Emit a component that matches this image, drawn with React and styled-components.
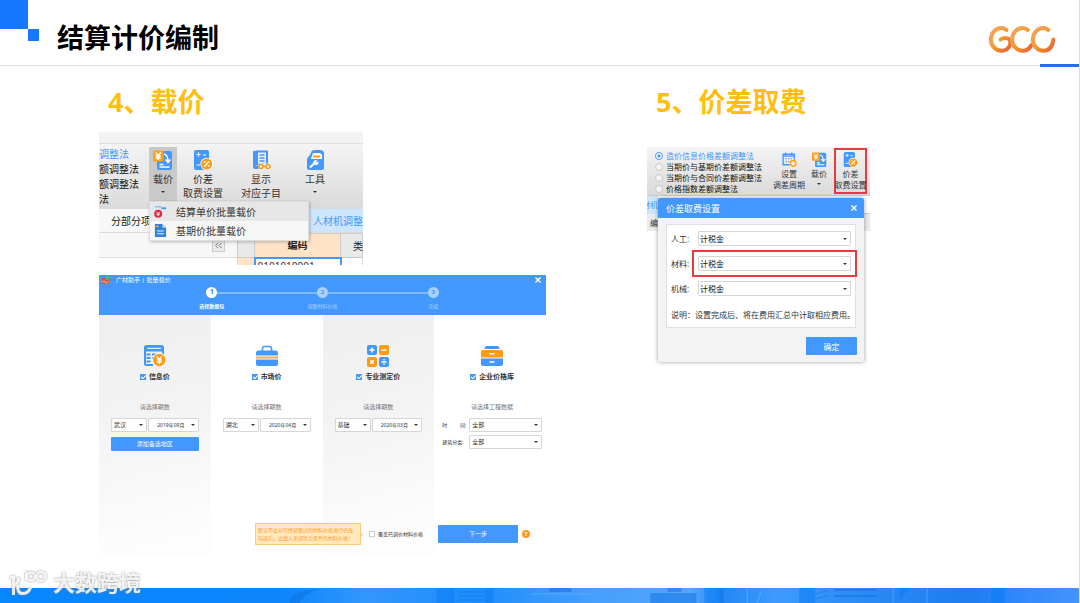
import React from 'react';
import styled, { createGlobalStyle, css } from 'styled-components';

const COLORS = {
	primary: '#4398fd',
	brand: '#1677ff',
	orange: '#ff9a14',
	heading: '#ffbf0f',
	red: '#e93a3d',
	text: '#333',
	muted: '#777',
	border: '#d6d6d6',
};

const App = () => (
	<Page>
		<GlobalStyle />
		<Header>
			<Squares><i /><i /></Squares>
			<Title>结算计价编制</Title>
			<LogoBox><GccLogo /></LogoBox>
		</Header>
		<Main>
			<Column>
				<Heading>4、载价</Heading>
				<RibbonCapture />
				<PriceCapture />
			</Column>
			<Column>
				<Heading>5、价差取费</Heading>
				<FeeCapture />
			</Column>
		</Main>
		<Footer>
			<Skyline />
			<Watermark>
				<WatermarkIcon />
				<span>大数跨境</span>
			</Watermark>
		</Footer>
	</Page>
);

export default App;

/* ---------- ribbon with the drop-down menu ---------- */

const RibbonCapture = () => (
	<RibbonFrame>
		<Strip />
		<Ribbon>
			<Methods>
				<li>调整法</li>
				<li>额调整法</li>
				<li>额调整法</li>
				<li>法</li>
			</Methods>
			<ToolSlot>
				<Tool $active>
					<LoadIcon />
					<span>载价</span>
					<Caret />
				</Tool>
				<Menu>
					<MenuItem $active><UnitIcon />结算单价批量载价</MenuItem>
					<MenuItem><BaseIcon />基期价批量载价</MenuItem>
				</Menu>
			</ToolSlot>
			<Tool $width={52}><DiffIcon /><span>价差</span><span>取费设置</span></Tool>
			<Tool $width={64}><ShowIcon /><span>显示</span><span>对应子目</span></Tool>
			<Tool $width={44}><ToolIcon /><span>工具</span><Caret /></Tool>
		</Ribbon>
		<TabRow>
			<Tab>分部分项</Tab>
			<Tab $active>人材机调整</Tab>
		</TabRow>
		<SheetRow>
			<SheetSide><Collapse aria-label="收起"><CollapseIcon /></Collapse></SheetSide>
			<Sheet>
				<thead>
					<tr><th /><th>编码</th><th>类</th></tr>
				</thead>
				<tbody>
					<tr><td /><td>0101010001</td><td /></tr>
				</tbody>
			</Sheet>
		</SheetRow>
	</RibbonFrame>
);

/* ---------- batch price window ---------- */

const STEPS = ['选择数据包', '调整材料价格', '完成'];

const SOURCES = [
	{ name: '信息价', icon: () => <InfoIcon />, hint: '请选择期数', area: '武汉', month: '2019年09月', extra: true },
	{ name: '市场价', icon: () => <MarketIcon />, hint: '请选择期数', area: '湖北', month: '2020年04月' },
	{ name: '专业测定价', icon: () => <CalcIcon />, hint: '请选择期数', area: '基础', month: '2020年03月' },
	{ name: '企业价格库', icon: () => <DrawerIcon />, hint: '请选择工程数据' },
];

const Picker = ({ value, label, ...rest }) => (
	<SelectBox {...rest}>
		<select aria-label={label} defaultValue={value}>
			<option>{value}</option>
		</select>
		<Caret />
	</SelectBox>
);

const PriceCapture = () => (
	<PriceFrame>
		<PriceHead>
			<PriceTitle>
				<AppMark />
				<span>广材助手 | 批量载价</span>
				<CloseButton aria-label="关闭"><CloseIcon /></CloseButton>
			</PriceTitle>
			<Steps>
				{STEPS.map((step, index) => (
					<Step key={step} $active={index === 0}>
						<b>{index + 1}</b>
						<span>{step}</span>
					</Step>
				))}
			</Steps>
		</PriceHead>
		<PriceBody>
			<Cards>
				{SOURCES.map((source) => (
					<Card key={source.name}>
						{source.icon()}
						<Check $bold>
							<input type="checkbox" defaultChecked />
							{source.name}
						</Check>
						<Hint>{source.hint}</Hint>
						{source.area ? (
							<PickerRow>
								<Picker label="地区" value={source.area} $grow={36} />
								<Picker label="期数" value={source.month} $grow={51} $date />
							</PickerRow>
						) : (
							<Fields>
								<label><span>时<i />间:</span><Picker label="时间" value="全部" /></label>
								<label><span>建筑分类:</span><Picker label="建筑分类" value="全部" /></label>
							</Fields>
						)}
						{source.extra && <AddButton>添加备选地区</AddButton>}
					</Card>
				))}
			</Cards>
			<Actions>
				<Tip>
					默认不会对已经调整过的材料价格进行修改,<br />
					勾选后，会载入全部符合条件的材料价格！
				</Tip>
				<Check $small>
					<input type="checkbox" />
					覆盖已调价材料价格
				</Check>
				<NextButton>下一步</NextButton>
				<Help aria-label="帮助">?</Help>
			</Actions>
		</PriceBody>
	</PriceFrame>
);

/* ---------- fee dialog ---------- */

const METHODS = [
	'造价信息价格差额调整法',
	'当期价与基期价差额调整法',
	'当期价与合同价差额调整法',
	'价格指数差额调整法',
];

const FEES = [
	{ label: '人工:' },
	{ label: '材料:', marked: true },
	{ label: '机械:' },
];

const FeeCapture = () => (
	<FeeFrame>
		<FeeRibbon>
			<Radios>
				{METHODS.map((method, index) => (
					<label key={method}>
						<input type="radio" name="method" defaultChecked={index === 0} />
						{method}
					</label>
				))}
			</Radios>
			<SmallTool><CalendarIcon /><span>设置</span><span>调差周期</span></SmallTool>
			<SmallTool><LoadIcon /><span>载价</span><Caret /></SmallTool>
			<SmallTool $marked><DiffIcon /><span>价差</span><span>取费设置</span></SmallTool>
		</FeeRibbon>
		<FeeTabs><span>材机</span></FeeTabs>
		<FeeSheet>编</FeeSheet>
		<Dialog role="dialog" aria-label="价差取费设置">
			<DialogHead>
				<span>价差取费设置</span>
				<CloseButton aria-label="关闭"><CloseIcon /></CloseButton>
			</DialogHead>
			<Panel>
				{FEES.map(({ label, marked }) => (
					<FeeRow key={label}>
						<span>{label}</span>
						<Mark $on={marked}>
							<Picker label={label} value="计税金" $large />
						</Mark>
					</FeeRow>
				))}
				<Note>说明：设置完成后、将在费用汇总中计取相应费用。</Note>
			</Panel>
			<OkButton>确定</OkButton>
		</Dialog>
	</FeeFrame>
);

/* ---------- drawings ---------- */

const GccLogo = () => (
	<svg width="68" height="29" viewBox="0 0 68 29" fill="none" strokeWidth="4" strokeLinecap="round">
		<defs>
			<linearGradient id="gcc" x1="0" y1="0" x2="1" y2="1">
				<stop offset="0" stopColor="#f2a568" />
				<stop offset=".5" stopColor="#f39a2c" />
				<stop offset="1" stopColor="#ea5c35" />
			</linearGradient>
		</defs>
		<path stroke="url(#gcc)" d="M18.500 5Q16 3 13.300 3A10.400 11.400 0 0 0 13.300 25.800Q19.500 25.800 22 20C23.500 15.500 21 13 17.500 13Q14.500 13 12.500 14.500" />
		<path stroke="url(#gcc)" d="M39.700 5Q37.500 3 34.500 3A10.400 11.400 0 0 0 34.500 25.800Q40.500 25.800 43.500 20" />
		<path stroke="url(#gcc)" d="M60.300 5Q58 3 55.300 3A10.400 11.400 0 0 0 55.300 25.800Q64 25.800 65.400 14.500" />
	</svg>
);

const LoadIcon = () => (
	<svg viewBox="0 0 20 20">
		<path fill="#4398fd" d="M9 1h8a2 2 0 0 1 2 2v15a2 2 0 0 1-2 2H6a2 2 0 0 1-2-2V11h6z" />
		<path fill="none" stroke="#fff" strokeWidth="1.500" d="M11 4q4 1 4 8M12.500 9.500l2.500 3 2.500-3M6.500 14.500h4M6.500 17h10" />
		<rect width="10.500" height="11" y=".5" rx="1" fill="#ffa11c" />
		<path stroke="#fff" strokeWidth="1.300" d="M2.500 2.500l2.700 3 2.700-3M5.200 5.500v4.500M2.700 6h5M2.700 8h5" fill="none" />
	</svg>
);

const DiffIcon = () => (
	<svg viewBox="0 0 20 20">
		<rect x="1" width="15" height="20" rx="2" fill="#4398fd" />
		<path stroke="#fff" strokeWidth="1.200" d="M3.500 4.500h4M5.500 2.500v4M3.500 15h3.500M10 5h3" />
		<circle cx="13.700" cy="14" r="6.300" fill="#fff" />
		<circle cx="13.700" cy="14" r="5.500" fill="#ff9a14" />
		<path stroke="#fff" strokeWidth="1.400" d="M11.200 16.700l5-5.400M10.800 12h1.800M14.800 16h1.800" />
	</svg>
);

const ShowIcon = () => (
	<svg viewBox="0 0 20 20">
		<path fill="#4398fd" d="M2 1h3v15h4v3H4a2 2 0 0 1-2-2z" />
		<path fill="none" stroke="#4398fd" strokeWidth="2" d="M6 1.500h10v13H6z" />
		<path stroke="#4398fd" strokeWidth="1.500" d="M8.500 5h5M8.500 8h5M8.500 11h5" />
		<path fill="#eee" d="M7.500 13.500h12V20h-12z" />
		<g fill="none" stroke="#ff9a14" strokeWidth="1.500">
			<circle cx="10" cy="16.500" r="2" /><circle cx="17" cy="16.500" r="2" /><path d="M12 16.500h3" />
		</g>
	</svg>
);

const ToolIcon = () => (
	<svg viewBox="0 0 20 20">
		<path fill="#4398fd" d="M6 3q0-3 4-3h5q4 0 4 4v14q0 2-2 2H4q-2 0-2-2V9z" />
		<path fill="#fff" d="M8 3h7l2 2v4H6z" />
		<path fill="#ff9a14" d="M8 5.500h7.500v2H8z" />
		<path stroke="#fff" strokeWidth="2" d="M5 17.500l5-5" />
		<circle cx="11" cy="12.500" r="2.500" fill="#fff" />
		<path stroke="#4398fd" strokeWidth="1.500" d="M11.500 12l3-3" />
	</svg>
);

const CalendarIcon = () => (
	<svg viewBox="0 0 20 20">
		<path fill="none" stroke="#4398fd" strokeWidth="1.800" d="M1.500 3h15v14h-15zM1.500 5.500h15M5 .5v4M13 .5v4" />
		<path stroke="#4398fd" strokeWidth="1.500" strokeDasharray="2 1.500" d="M4.500 9h10M4.500 13h6" />
		<circle cx="15" cy="15" r="5" fill="#fff" />
		<circle cx="15" cy="15" r="3.700" fill="none" stroke="#ff9a14" strokeWidth="1.800" />
		<path fill="none" stroke="#ff9a14" d="M15 13v2h2" />
	</svg>
);

const UnitIcon = () => (
	<svg viewBox="0 0 14 14">
		<path fill="#e4e9ef" d="M2 0h10v10H2z" />
		<path stroke="#4398fd" strokeWidth="2" d="M8 3.500h5" />
		<path stroke="#6f9fce" d="M1 2h7" />
		<circle cx="4.500" cy="9.500" r="4.300" fill="#de2945" />
		<path fill="none" stroke="#fff" d="M2.700 7.500l1.800 2 1.800-2M4.500 9.500v2.500M2.700 10h3.600" />
	</svg>
);

const BaseIcon = () => (
	<svg viewBox="0 0 14 14">
		<path fill="#2f82e0" d="M1 0h8l4 4v10H1z" />
		<path fill="#b9d8fb" d="M9 0l4 4H9z" />
		<path stroke="#fff" d="M3.500 7.500h7M3.500 10.500h7" />
		<path stroke="#ffb03a" strokeWidth="1.500" d="M2 2.500h3" />
	</svg>
);

const CollapseIcon = () => (
	<svg width="11" height="11" viewBox="0 0 11 11" fill="none" stroke="#777">
		<path d="M5 3L2.500 5.500 5 8M8.500 3L6 5.500 8.500 8" />
	</svg>
);

const CloseIcon = () => (
	<svg width="6" height="6" viewBox="0 0 6 6">
		<path stroke="#fff" strokeWidth="1.400" d="M.5.5l5 5M5.500.5l-5 5" />
	</svg>
);

const AppMark = () => (
	<svg width="9" height="9" viewBox="0 0 9 9">
		<path fill="#c8553d" d="M1 2h3v2h4v4H0V5h1z" />
		<path stroke="#f4c7a0" strokeWidth=".7" d="M0 6h8M3 4v2M5 6v2" />
		<path fill="#6fbf4b" d="M5 2q1-2 4-2-1 3-4 3z" />
	</svg>
);

const InfoIcon = () => (
	<svg viewBox="0 0 22 22">
		<path fill="#4398fd" d="M2.500 0h15A2.500 2.500 0 0 1 20 2.500V12h-2V6.500H2V19h7v2H2.500A2.500 2.500 0 0 1 0 18.500v-16A2.500 2.500 0 0 1 2.500 0z" />
		<path stroke="#fff" d="M3 3.300h14" />
		<path stroke="#4398fd" strokeWidth="1.800" d="M2.500 9.500h4M8 9.500h6M2.500 13h4M2.500 16.500h4M8 13h2" />
		<circle cx="15.300" cy="15" r="7.200" fill="#fff" />
		<circle cx="15.300" cy="15" r="6.200" fill="#ff9a14" />
		<path fill="none" stroke="#fff" strokeWidth="1.300" d="M12.800 11.500l2.500 3 2.500-3M15.300 14.500V19M12.800 15h5M12.800 17h5" />
	</svg>
);

const MarketIcon = () => (
	<svg viewBox="0 0 22 22">
		<path fill="none" stroke="#4398fd" strokeWidth="1.600" d="M6.500 6V3.500a2 2 0 0 1 2-2h5a2 2 0 0 1 2 2V6" />
		<path fill="#4398fd" d="M2.500 5.500h17A2.500 2.500 0 0 1 22 8v2.500H0V8a2.500 2.500 0 0 1 2.500-2.500zM0 14.500h22V19a2 2 0 0 1-2 2H2a2 2 0 0 1-2-2z" />
		<path fill="#f5a94a" d="M0 11.500h22v2H0z" />
	</svg>
);

const CalcIcon = () => (
	<svg viewBox="0 0 22 22">
		<rect width="10" height="10" rx="2" fill="#4398fd" />
		<rect x="12" width="10" height="10" rx="2" fill="#ff9a14" />
		<rect y="12" width="10" height="10" rx="2" fill="#ff9a14" />
		<rect x="12" y="12" width="10" height="10" rx="2" fill="#4398fd" />
		<path stroke="#fff" strokeWidth="1.500" d="M2.500 5h5M5 2.500v5M14.500 5h5M3.300 15.300l3.400 3.400M6.700 15.300l-3.400 3.400M14.500 17h5M17 14v1.500M17 18.500V20" />
	</svg>
);

const DrawerIcon = () => (
	<svg viewBox="0 0 22 22">
		<path fill="#4398fd" d="M5 1h12l2 3H3z" />
		<rect y="5" width="22" height="7.500" rx="1.500" fill="#ff9a14" />
		<path fill="#4398fd" d="M0 13.500h22V19a2 2 0 0 1-2 2H2a2 2 0 0 1-2-2z" />
		<path stroke="#fff" strokeWidth="1.500" d="M8.500 8.700h5M8.500 17h5" />
	</svg>
);

const WatermarkIcon = () => (
	<svg width="40" height="28" viewBox="0 0 40 28" fill="none" stroke="currentColor" strokeWidth="3">
		<path d="M1 9.500h3.500V27M5 17q4-1 5-7.500M9 17q-1.500 8.500 5 8.500 5.500 0 7.500-6" />
		<path strokeWidth="2" d="M17 3v9" />
		<circle cx="22" cy="8.500" r="4" strokeWidth="2.500" />
		<circle cx="32" cy="8.500" r="4.500" strokeWidth="2.500" />
	</svg>
);

const Skyline = () => (
	<SkylineArt viewBox="0 0 1080 15" preserveAspectRatio="none">
		<defs>
			<linearGradient id="sky">
				<stop offset="0" stopColor="#0787ff" />
				<stop offset=".26" stopColor="#0d85fb" />
				<stop offset=".34" stopColor="#3296fd" />
				<stop offset=".44" stopColor="#1e8dfb" />
				<stop offset=".55" stopColor="#469ffc" />
				<stop offset=".64" stopColor="#54a6fc" />
				<stop offset=".67" stopColor="#2388f4" />
				<stop offset=".72" stopColor="#3d9bfd" />
				<stop offset=".8" stopColor="#2a8bf6" />
				<stop offset=".9" stopColor="#1d7df0" />
				<stop offset=".94" stopColor="#2e88fc" />
				<stop offset="1" stopColor="#4594fd" />
			</linearGradient>
		</defs>
		<path fill="url(#sky)" d="M0 0h1080v15H0z" />
		<path fill="#0b6fe0" opacity=".5" d="M290 10q10-9 30-9-14 3-20 14h-10zM550 0h22v4h-22zM651 5h46v10h-46zM668 0h14v4h-14zM720 0h4v15h-4zM835 1h42v2h-42zM835 7h42v2h-42z" />
		<path fill="#087bf3" opacity=".5" d="M437 0h18v15h-18zM486 0h8v15h-8zM705 0h15v15h-15zM800 0h16v15h-16zM900 0l10 0-9 12zM992 0h14v15h-14z" />
		<path stroke="#0870e4" opacity=".5" d="M459 4h28M459 8h26M459 12h30M816 6l14-4M816 11l14-4" />
		<path stroke="#8cc5ff" opacity=".4" d="M532 6h60M748 1v14M758 15l4-12M894 0v15M928 0v15" />
	</SkylineArt>
);

/* ---------- styles ---------- */

const GlobalStyle = createGlobalStyle`
	* {
		box-sizing: border-box;
	}
	body {
		margin: 0;
		background: #fff;
		color: ${COLORS.text};
		font-family: "Noto Sans", "Noto Sans CJK SC", sans-serif;
	}
	button, select, input {
		font: inherit;
		color: inherit;
		margin: 0;
		padding: 0;
		border: 0;
		background: none;
	}
	svg {
		display: block;
		flex: none;
	}
`;

const Page = styled.div`
	display: flex;
	flex-direction: column;
	min-height: 100vh;
	border-right: 1px solid #ddd;
`;
const Header = styled.header`
	display: flex;
	height: 66px;
	border-bottom: 1px solid #dedede;
`;
const Squares = styled.div`
	width: 57px;
	i {
		display: block;
		width: 28px;
		height: 29px;
		background: ${COLORS.brand};
	}
	i + i {
		width: 11px;
		height: 12px;
		margin-left: 28px;
	}
`;
const Title = styled.h1`
	flex: 1;
	margin: 0;
	padding-top: 18px;
	font-size: 27px;
	line-height: 40px;
	color: #000;
`;
const LogoBox = styled.div`
	display: flex;
	justify-content: flex-end;
	padding: 25px 23px 0 0;
	margin-bottom: -2px;
	background: linear-gradient(#2271e8, #2271e8) right bottom / 39px 3px no-repeat;
`;
const Main = styled.main`
	display: grid;
	grid-template-columns: 548fr 432fr;
	padding-left: 99px;
`;
const Column = styled.section`
	min-width: 0;
`;
const Heading = styled.h2`
	margin: 0;
	padding: 19px 0 13px 9px;
	font-size: 27px;
	line-height: 34px;
	color: ${COLORS.heading};
`;
const Footer = styled.footer`
	position: relative;
	margin-top: auto;
`;
const SkylineArt = styled.svg`
	width: 100%;
	height: 15px;
`;
const Watermark = styled.div`
	position: absolute;
	left: 9px;
	bottom: 7px;
	display: flex;
	align-items: center;
	gap: 4px;
	color: rgba(255, 255, 255, .85);
	font-size: 22px;
	font-weight: bold;
	line-height: 28px;
	filter: drop-shadow(0 0 1px #888);
`;

const Caret = styled.i`
	display: block;
	margin: auto;
	border: 2px solid transparent;
	border-top-color: #333;
	border-bottom: 0;
`;

const RibbonFrame = styled.div`
	max-width: 264px;
	overflow: hidden;
	margin-bottom: 10px;
	font-size: 10px;
	line-height: 14px;
`;
const Strip = styled.div`
	height: 12px;
	background: #f3f3f3;
	border-bottom: 1px solid #ddd;
`;
const Ribbon = styled.div`
	display: flex;
	height: 65px;
	padding-top: 3px;
	background: linear-gradient(#f4f4f4, #dadada);
`;
const Methods = styled.ul`
	width: 50px;
	margin: 0;
	padding: 0;
	list-style: none;
	line-height: 15px;
	color: #111;
	li:first-child {
		color: ${COLORS.primary};
	}
`;
const ToolSlot = styled.div`
	position: relative;
	z-index: 1;
`;
const Tool = styled.button`
	display: flex;
	flex-direction: column;
	align-items: center;
	width: ${props => props.$width || 28}px;
	height: 55px;
	padding-top: 3px;
	white-space: nowrap;
	${props => props.$active && css`
		background: #c9c9c9;
	`}
	svg {
		width: 20px;
		height: 20px;
		margin-bottom: 2px;
	}
	${Caret} {
		margin: 5px 0 0;
	}
`;
const Menu = styled.div`
	position: absolute;
	left: 0;
	top: 54px;
	width: 160px;
	background: #f6f6f6;
	border: 1px solid #ddd;
	box-shadow: 1px 1px 3px rgba(0, 0, 0, .25);
`;
const MenuItem = styled.button`
	display: flex;
	align-items: center;
	gap: 9px;
	width: 100%;
	height: 19px;
	padding-left: 4px;
	background: ${props => props.$active ? '#e7e7e7' : 'none'};
	svg {
		width: 13px;
		height: 13px;
	}
`;
const TabRow = styled.div`
	display: flex;
	justify-content: space-between;
	height: 24px;
	background: #f7f7f7;
	border-bottom: 1px solid #ddd;
`;
const Tab = styled.button`
	padding-left: 12px;
	white-space: nowrap;
	color: #222;
	${props => props.$active && css`
		width: 55px;
		padding-left: 5px;
		background: #cde6fd;
		color: ${COLORS.primary};
	`}
`;
const SheetRow = styled.div`
	display: flex;
	height: 32px;
	overflow: hidden;
`;
const SheetSide = styled.div`
	display: flex;
	justify-content: flex-end;
	flex: 1;
	height: 25px;
	padding: 6px 12px 0 0;
	background: #f7f7f7;
	border-bottom: 1px solid #ddd;
`;
const Collapse = styled.button`
	width: 13px;
	height: 13px;
	background: #e8e8e8;
	border: 1px solid #ccc;
`;
const Sheet = styled.table`
	width: 126px;
	table-layout: fixed;
	border-collapse: collapse;
	white-space: nowrap;
	th {
		height: 24px;
		padding: 0;
		background: #e9e9e9;
		border: 1px solid #ccc;
		color: #222;
	}
	th:first-child {
		width: 17px;
	}
	th:nth-child(2) {
		width: 86px;
		background: #fee3c6;
	}
	th:last-child {
		padding-left: 12px;
		font-weight: normal;
	}
	td {
		padding: 0 0 0 2px;
		border: 1px solid #ddd;
	}
	td:first-child {
		background: #fee3c6;
	}
	td:nth-child(2) {
		border: 2px solid ${COLORS.primary};
	}
`;

const PriceFrame = styled.div`
	max-width: 447px;
	font-size: 6px;
	line-height: 8px;
`;
const PriceHead = styled.div`
	height: 40px;
	background: ${COLORS.primary};
	color: #fff;
`;
const PriceTitle = styled.div`
	display: flex;
	align-items: center;
	gap: 6px;
	height: 10px;
	padding: 0 5px 0 2px;
`;
const CloseButton = styled.button`
	margin-left: auto;
	cursor: pointer;
`;
const Steps = styled.ol`
	display: flex;
	width: 332px;
	margin: 0 auto;
	padding: 2px 0 0;
	list-style: none;
`;
const Step = styled.li`
	display: grid;
	grid-template-columns: 1fr 11px 1fr;
	flex: 1;
	align-items: center;
	row-gap: 4px;
	font-size: 5px;
	color: #a9d0ff;
	&::before, &::after {
		content: '';
		height: 2px;
		background: #82bbff;
		grid-row: 1;
	}
	&::before {
		grid-column: 1;
	}
	&::after {
		grid-column: 3;
	}
	&:first-child::before, &:last-child::after {
		visibility: hidden;
	}
	b {
		grid-column: 2;
		grid-row: 1;
		height: 11px;
		border-radius: 50%;
		background: #a9d0ff;
		color: ${COLORS.primary};
		font-size: 6px;
		line-height: 11px;
		text-align: center;
	}
	span {
		grid-column: 1 / 4;
		text-align: center;
	}
	${props => props.$active && css`
		color: #fff;
		font-weight: bold;
		b {
			background: #fff;
		}
	`}
`;
const PriceBody = styled.div`
	display: grid;
`;
const Cards = styled.div`
	grid-area: 1 / 1;
	display: grid;
	grid-template-columns: repeat(4, 1fr);
`;
const Card = styled.section`
	display: flex;
	flex-direction: column;
	align-items: center;
	min-height: 240px;
	padding: 30px 12px 0;
	&:nth-child(odd) {
		background: linear-gradient(165deg, #efefef, #f3f3f3 40%, #fdfdfd 90%);
	}
	&:last-child {
		padding: 30px 4px 0 8px;
	}
	> svg {
		width: 22px;
		height: 22px;
		margin-bottom: 5px;
	}
`;
const Check = styled.label`
	display: flex;
	align-items: center;
	gap: 3px;
	font-size: ${props => props.$small ? 5 : 7}px;
	line-height: 10px;
	font-weight: ${props => props.$bold ? 'bold' : 'normal'};
	white-space: nowrap;
	input {
		appearance: none;
		width: 6px;
		height: 6px;
		border: 1px solid #ccc;
		background: #fff;
	}
	input:checked {
		border-color: ${COLORS.primary};
		background: ${COLORS.primary};
	}
	input:checked::before {
		content: '';
		display: block;
		width: 4px;
		height: 2px;
		border: solid #fff;
		border-width: 0 0 1px 1px;
		transform: rotate(-45deg);
	}
`;
const Hint = styled.p`
	margin: 20px 0 6px;
	line-height: 10px;
	color: ${COLORS.muted};
`;
const SelectBox = styled.span`
	display: grid;
	flex: ${props => props.$grow || 1};
	min-width: 0;
	height: 14px;
	border: 1px solid ${COLORS.border};
	border-radius: 1px;
	background: #fff;
	select {
		grid-area: 1 / 1;
		appearance: none;
		min-width: 0;
		padding-left: ${props => props.$date ? 8 : 2}px;
		font-size: ${props => props.$date ? 5 : 6}px;
		outline: none;
	}
	${Caret} {
		grid-area: 1 / 1;
		margin: auto 3px auto auto;
		pointer-events: none;
	}
	${props => props.$large && css`
		height: 15px;
		select {
			padding-left: 1px;
			font-size: 8px;
			color: #111;
		}
	`}
`;
const PickerRow = styled.div`
	display: flex;
	gap: 1px;
	align-self: stretch;
`;
const Fields = styled.div`
	display: grid;
	gap: 3px;
	align-self: stretch;
	label {
		display: flex;
		align-items: center;
	}
	label > span:first-child {
		display: flex;
		justify-content: space-between;
		width: 27px;
		padding-right: 3px;
		font-size: 5px;
		white-space: nowrap;
	}
	i {
		flex: 1;
	}
`;
const Button = styled.button`
	background: ${COLORS.primary};
	border-radius: 1px;
	color: #fff;
	cursor: pointer;
`;
const AddButton = styled(Button)`
	align-self: stretch;
	height: 14px;
	margin-top: 5px;
`;
const Actions = styled.div`
	grid-area: 1 / 1;
	align-self: end;
	display: flex;
	align-items: center;
	justify-content: flex-end;
	padding: 0 16px 10px;
`;
const Tip = styled.p`
	position: relative;
	margin: 0 8px 0 0;
	width: 106px;
	padding: 2px 0 2px 2px;
	border: 1px solid #f8cd78;
	background: #ffe9bd;
	color: #ff9a30;
	font-size: 5px;
	white-space: nowrap;
	&::after {
		content: '';
		position: absolute;
		left: 100%;
		top: 8px;
		border: 3px solid transparent;
		border-left-color: #f8cd78;
		border-right: 0;
	}
`;
const NextButton = styled(Button)`
	width: 80px;
	height: 18px;
	margin: 0 4px 0 15px;
`;
const Help = styled.button`
	width: 8px;
	height: 8px;
	border-radius: 50%;
	background: ${COLORS.orange};
	color: #fff;
	font-weight: bold;
	line-height: 8px;
`;

const FeeFrame = styled.div`
	position: relative;
	max-width: 223px;
	margin-top: 15px;
	font-size: 8px;
	line-height: 11px;
`;
const FeeRibbon = styled.div`
	display: flex;
	height: 49px;
	padding: 1px 3px 0 8px;
	background: linear-gradient(#f4f4f4, #dadada);
	border-bottom: 1px solid #ccc;
`;
const Radios = styled.div`
	flex: 1;
	padding-top: 2px;
	white-space: nowrap;
	color: #111;
	label {
		display: flex;
		align-items: center;
		gap: 3px;
	}
	label:first-child {
		color: ${COLORS.primary};
	}
	input {
		appearance: none;
		width: 8px;
		height: 8px;
		border: 1px solid #c8c8c8;
		border-radius: 50%;
		background: #f4f4f4;
	}
	input:checked {
		border-color: ${COLORS.primary};
		background: radial-gradient(${COLORS.primary} 1px, #fff 2px);
	}
`;
const SmallTool = styled.button`
	display: flex;
	flex-direction: column;
	align-items: center;
	width: ${props => props.$marked ? 33 : 30}px;
	height: 46px;
	padding-top: 4px;
	white-space: nowrap;
	${props => props.$marked && css`
		padding-top: 2px;
		border: 2px solid ${COLORS.red};
	`}
	svg {
		width: 15px;
		height: 15px;
		margin-bottom: 1px;
	}
	${Caret} {
		margin: 4px 0 0;
	}
`;
const FeeTabs = styled.div`
	height: 18px;
	line-height: 18px;
	border-bottom: 1px solid #ccc;
	color: ${COLORS.primary};
	span {
		display: flex;
		justify-content: flex-end;
		width: 11px;
		overflow: hidden;
		background: #cde6fd;
		white-space: nowrap;
	}
`;
const FeeSheet = styled.div`
	height: 17px;
	padding-left: 3px;
	background: #ebebeb;
	line-height: 17px;
`;
const Dialog = styled.div`
	position: absolute;
	left: 11px;
	right: 6px;
	top: 51px;
	display: flex;
	flex-direction: column;
	padding-bottom: 7px;
	background: #f3f3f3;
	border-radius: 2px;
	box-shadow: 0 0 4px rgba(0, 0, 0, .4);
`;
const DialogHead = styled.div`
	display: flex;
	align-items: center;
	height: 20px;
	padding: 0 7px 0 8px;
	border-radius: 2px 2px 0 0;
	background: ${COLORS.primary};
	color: #fff;
	font-size: 9px;
`;
const Panel = styled.div`
	display: grid;
	grid-template-columns: minmax(0, 1fr);
	gap: 10px;
	margin: 6px 8px 9px;
	padding: 6px 4px 7px;
	border: 1px solid #e0e0e0;
	background: #fff;
`;
const FeeRow = styled.div`
	display: flex;
	align-items: center;
	> span:first-child {
		width: 27px;
	}
`;
const Mark = styled.span`
	display: flex;
	flex: 1;
	${props => props.$on && css`
		outline: 2px solid ${COLORS.red};
		outline-offset: 4px;
	`}
`;
const Note = styled.p`
	margin: 3px 0 0;
	white-space: nowrap;
`;
const OkButton = styled(Button)`
	align-self: flex-end;
	width: 51px;
	height: 18px;
	margin-right: 7px;
`;
